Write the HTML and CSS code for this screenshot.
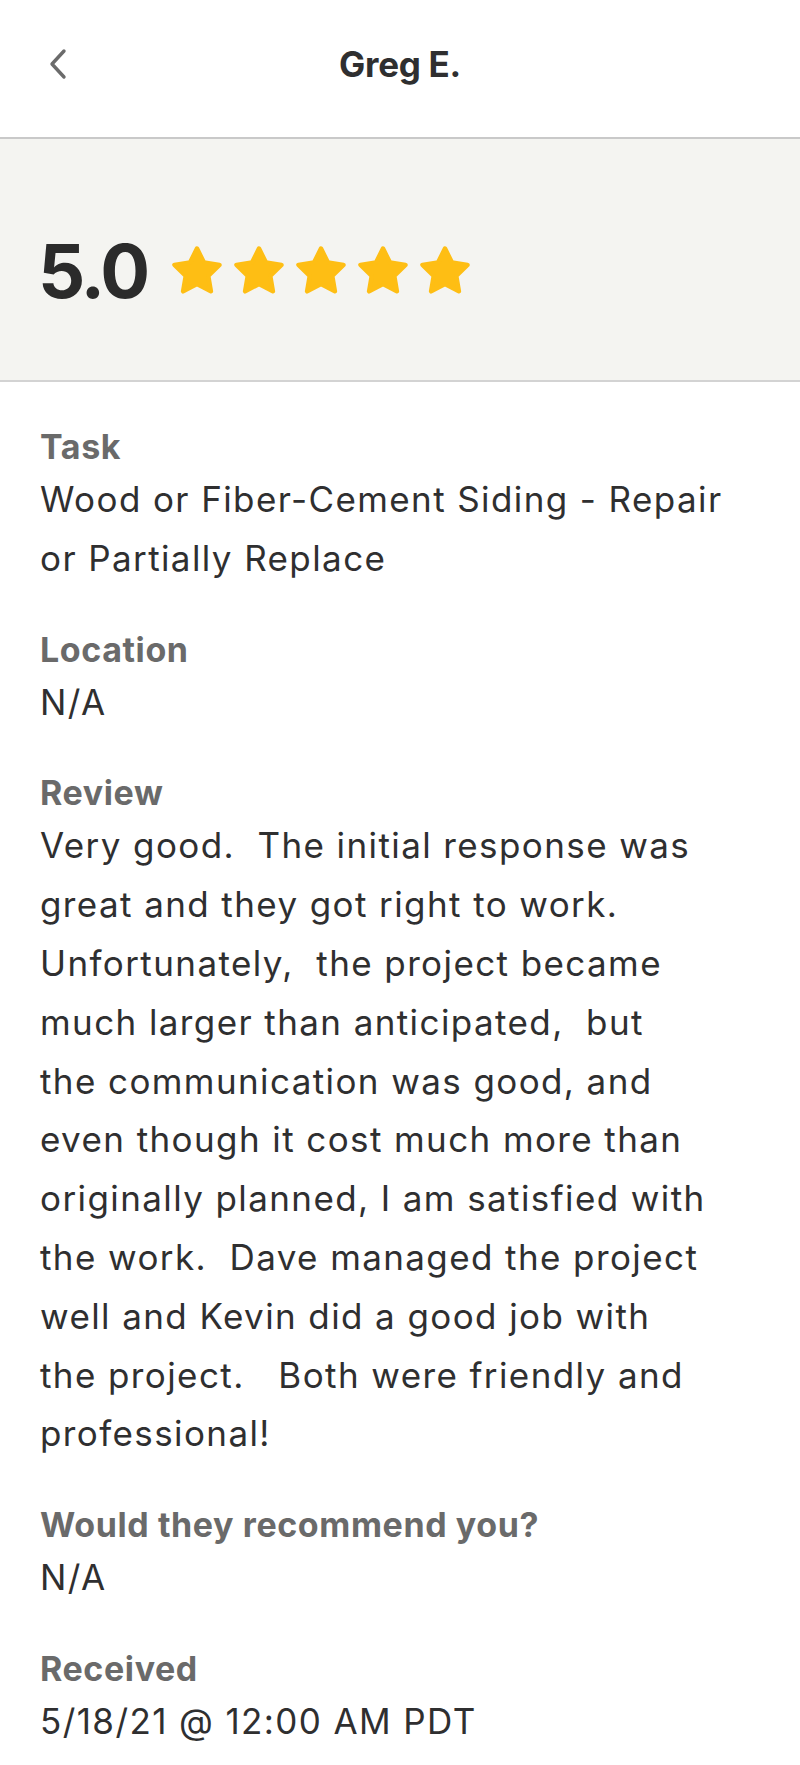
FILE: index.html
```html
<!DOCTYPE html>
<html lang="en">
<head>
<meta charset="utf-8">
<title>Greg E.</title>
<link rel="stylesheet" href="styles.css">
</head>
<body>
<header class="topbar">
  <button class="back" aria-label="Back">
    <svg viewBox="0 0 20 32" width="20" height="32"><path d="M16 3 L4 16 L16 29" fill="none" stroke="#6b6b6b" stroke-width="3.4" stroke-linecap="round" stroke-linejoin="round"/></svg>
  </button>
  <h1 class="title">Greg E.</h1>
  <span class="spacer"></span>
</header>
<section class="rating">
  <span class="score">5.0</span>
  <div class="stars">
    <svg class="star" viewBox="0 0 24 24"><path d="M12 2l3.09 6.26L22 9.27l-5 4.87 1.18 6.88L12 17.77l-6.18 3.25L7 14.14 2 9.27l6.91-1.01L12 2z"/></svg>
    <svg class="star" viewBox="0 0 24 24"><path d="M12 2l3.09 6.26L22 9.27l-5 4.87 1.18 6.88L12 17.77l-6.18 3.25L7 14.14 2 9.27l6.91-1.01L12 2z"/></svg>
    <svg class="star" viewBox="0 0 24 24"><path d="M12 2l3.09 6.26L22 9.27l-5 4.87 1.18 6.88L12 17.77l-6.18 3.25L7 14.14 2 9.27l6.91-1.01L12 2z"/></svg>
    <svg class="star" viewBox="0 0 24 24"><path d="M12 2l3.09 6.26L22 9.27l-5 4.87 1.18 6.88L12 17.77l-6.18 3.25L7 14.14 2 9.27l6.91-1.01L12 2z"/></svg>
    <svg class="star" viewBox="0 0 24 24"><path d="M12 2l3.09 6.26L22 9.27l-5 4.87 1.18 6.88L12 17.77l-6.18 3.25L7 14.14 2 9.27l6.91-1.01L12 2z"/></svg>
  </div>
</section>
<main class="details">
  <div class="field">
    <div class="label">Task</div>
    <div class="value">Wood or Fiber-Cement Siding - Repair<br>or Partially Replace</div>
  </div>
  <div class="field">
    <div class="label">Location</div>
    <div class="value">N/A</div>
  </div>
  <div class="field">
    <div class="label">Review</div>
    <div class="value">Very good.  The initial response was<br>great and they got right to work.<br>Unfortunately,  the project became<br>much larger than anticipated,  but<br>the communication was good, and<br>even though it cost much more than<br>originally planned, I am satisfied with<br>the work.  Dave managed the project<br>well and Kevin did a good job with<br>the project.   Both were friendly and<br>professional!</div>
  </div>
  <div class="field">
    <div class="label">Would they recommend you?</div>
    <div class="value">N/A</div>
  </div>
  <div class="field">
    <div class="label">Received</div>
    <div class="value">5/18/21 @ 12:00 AM PDT</div>
  </div>
</main>
</body>
</html>
```
FILE: styles.css
```css
* { box-sizing: border-box; }
html, body { margin: 0; padding: 0; background: #ffffff; }
body {
  font-family: Inter, "Liberation Sans", sans-serif;
  color: #2f2f30;
  width: 800px;
}
.topbar {
  height: 139px;
  display: grid;
  grid-template-columns: 1fr auto 1fr;
  align-items: center;
  padding: 0 0 10px 0;
  border-bottom: 2px solid #c9c9c9;
  box-shadow: 0 1px 0 #e9e9e9;
}
.back {
  justify-self: start;
  margin-left: 44px;
  background: none;
  border: 0;
  padding: 0;
  width: 28px;
  height: 40px;
  display: flex;
  align-items: center;
  justify-content: center;
}
.back svg { display: block; }
.title {
  margin: 0;
  font-size: 35px;
  font-weight: 700;
  color: #2f2f30;
  letter-spacing: -0.3px;
}
.rating {
  background: #f4f4f1;
  height: 243px;
  border-bottom: 2px solid #d3d3d3;
  display: flex;
  align-items: center;
  padding: 22px 0 0 38px;
  gap: 23px;
}
.score {
  font-size: 74px;
  font-weight: 700;
  letter-spacing: -3px;
  color: #2b2b2b;
  line-height: 1;
}
.stars {
  display: flex;
  gap: 8px;
  align-items: center;
}
.star {
  width: 54px;
  height: 54px;
  display: block;
}
.star path {
  fill: #febe14;
  stroke: #febe14;
  stroke-width: 2;
  stroke-linejoin: round;
}
.details {
  padding: 42px 40px 40px 40px;
  display: flex;
  flex-direction: column;
  gap: 39px;
}
.label {
  font-size: 34px;
  font-weight: 700;
  color: #6a6a6a;
  line-height: 46px;
  letter-spacing: 0.6px;
}
.value {
  font-size: 35px;
  line-height: 58.8px;
  white-space: pre-wrap;
  color: #2f2f30;
  letter-spacing: 1.4px;
}
```
